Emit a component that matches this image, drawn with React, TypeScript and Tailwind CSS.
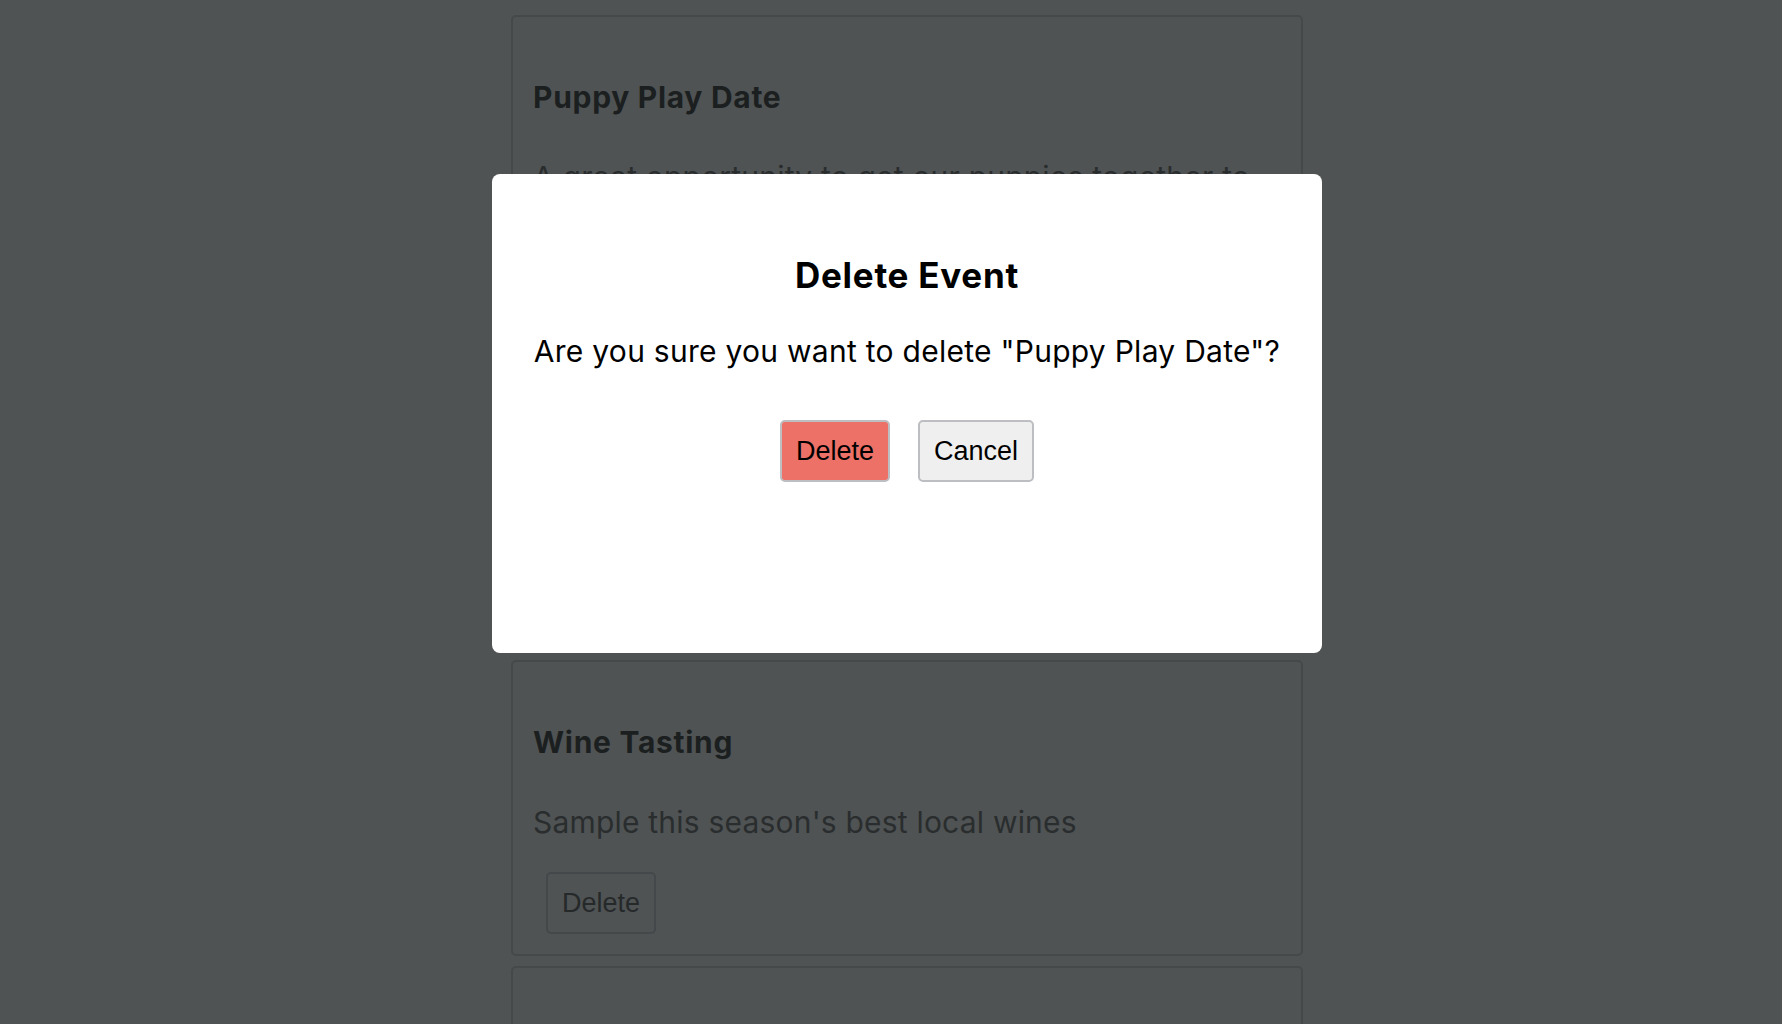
import React from 'react';

interface EventItem {
    title: string;
    description: string;
    tall?: boolean;
}

const events: EventItem[] = [
    {
        title: 'Puppy Play Date',
        description: 'A great opportunity to get our puppies together to play, run around the park and make new friends.',
        tall: true
    },
    {title: 'Wine Tasting', description: "Sample this season's best local wines"}
];

function EventCard({event}: { event: EventItem }) {
    return (
        <div
            className={`shrink-0 border-2 border-[#45494a] rounded-[5px] px-[20px] pt-[62px] pb-[20px] ${event.tall ? 'h-[635px]' : ''}`}>
            <h3 className="text-[30px] leading-[36px] font-bold tracking-[0.7px] text-[#1c1f20]">{event.title}</h3>
            <p className="mt-[44px] text-[30px] leading-[36px] tracking-[0.2px] text-[#2a2d2e]">{event.description}</p>
            <button
                className="mt-[32px] ml-[13px] h-[62px] px-[14px] border-2 border-[#45484a] rounded-[5px] font-['Liberation_Sans',Arial,sans-serif] text-[27px] text-[#26292a]">
                Delete
            </button>
        </div>
    );
}

function DeleteModal({title}: { title: string }) {
    return (
        <div
            className="absolute left-[492px] top-[174px] w-[830px] h-[479px] bg-white rounded-[8px] pt-[80px] flex flex-col items-center text-black">
            <h2 className="text-[35px] leading-[42px] font-bold tracking-[0.75px]">Delete Event</h2>
            <p className="mt-[37px] text-[30px] leading-[36px] tracking-[0.27px]">Are you sure you want to delete "{title}"?</p>
            <div className="mt-[51px] flex gap-[28px] font-['Liberation_Sans',Arial,sans-serif]">
                <button
                    className="h-[62px] px-[14px] bg-[#ed7167] border-2 border-[#bcbec1] rounded-[5px] text-[27px] text-black">
                    Delete
                </button>
                <button
                    className="h-[62px] px-[14px] bg-[#efefef] border-2 border-[#bcbec1] rounded-[5px] text-[27px] text-black">
                    Cancel
                </button>
            </div>
        </div>
    );
}

export default function App() {
    return (
        <div className="relative h-screen overflow-hidden bg-[#4f5354] font-['Inter','Noto_Sans',sans-serif]">
            <div className="ml-[511px] w-[792px] pt-[15px] flex flex-col gap-[10px]">
                {events.map((e) => (
                    <EventCard key={e.title} event={e}/>
                ))}
                <div className="shrink-0 h-[120px] border-2 border-[#45494a] rounded-[5px]"/>
            </div>
            <DeleteModal title="Puppy Play Date"/>
        </div>
    );
}
